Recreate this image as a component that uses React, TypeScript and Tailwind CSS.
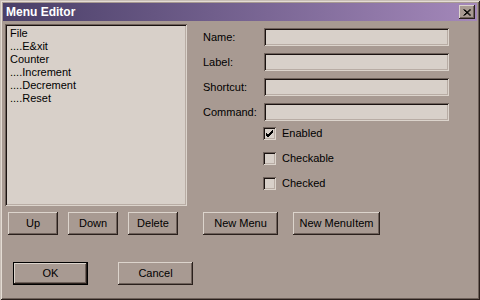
import React from "react";

const raised =
  "shadow-[inset_-1px_-1px_#2a201c,inset_1px_1px_#dcd4cc,inset_-2px_-2px_#6e615a]";
const sunken =
  "shadow-[inset_1px_1px_#6e615a,inset_-1px_-1px_#dcd4cc,inset_2px_2px_#1a1210,inset_-2px_-2px_#b8aca4]";

function Btn({ label, w, def }: { label: string; w: string; def?: boolean }) {
  if (def) {
    return (
      <div className={`${w} h-[23px] border border-black bg-[#a89a92]`}>
        <div className={`w-full h-full ${raised} flex items-center justify-center text-[11px] text-black`}>
          {label}
        </div>
      </div>
    );
  }
  return (
    <div className={`${w} h-[23px] bg-[#a89a92] ${raised} flex items-center justify-center text-[11px] text-black`}>
      {label}
    </div>
  );
}

function Field({ label }: { label: string }) {
  return (
    <div className="flex items-center h-[18px]">
      <div className="w-[61px] text-[11px] text-black">{label}</div>
      <div className={`w-[185px] h-[18px] bg-[#d8d0c9] ${sunken}`} />
    </div>
  );
}

function Check({ label, checked }: { label: string; checked?: boolean }) {
  return (
    <div className="flex items-center h-[13px]">
      <div className={`w-[13px] h-[13px] bg-[#d8d0c9] ${sunken} flex items-center justify-center`}>
        {checked && (
          <svg width="9" height="9" viewBox="0 0 9 9">
            <path d="M1 4 L3 6 L8 1 M1 5 L3 7 L8 2 M1 6 L3 8 L8 3" stroke="#000" strokeWidth="1" fill="none" />
          </svg>
        )}
      </div>
      <div className="ml-[6px] text-[11px] text-black">{label}</div>
    </div>
  );
}

export default function App() {
  const items = ["File", "....E&xit", "Counter", "....Increment", "....Decrement", "....Reset"];
  return (
    <div
      className={`w-[480px] h-[300px] bg-[#a89a92] p-[3px] flex flex-col shadow-[inset_1px_1px_#c8beb6,inset_-1px_-1px_#2a201c,inset_2px_2px_#e4dcd4,inset_-2px_-2px_#6e615a] overflow-hidden`}
      style={{ fontFamily: '"Liberation Sans", Arial, sans-serif' }}
    >
      <div className="h-[18px] flex items-center justify-between bg-gradient-to-r from-[#4a3f68] to-[#a488ba] pl-[3px] pr-[2px]">
        <span className="text-white font-bold text-[12px] leading-none">Menu Editor</span>
        <div className={`w-[16px] h-[14px] bg-[#a89a92] ${raised} flex items-center justify-center`}>
          <svg width="8" height="7" viewBox="0 0 8 7">
            <path d="M0.5 0.5 L7 6.5 M1.5 0.5 L8 6.5 M7 0.5 L0.5 6.5 M8 0.5 L1.5 6.5" stroke="#000" strokeWidth="1" fill="none" />
          </svg>
        </div>
      </div>
      <div className="flex">
        <div className="ml-[2px] mt-[3px] flex flex-col">
          <div className={`w-[182px] h-[182px] bg-[#d8d0c9] ${sunken} pl-[5px] pt-[3px]`}>
            {items.map((t) => (
              <div key={t} className="h-[13px] leading-[13px] text-[11px] text-black whitespace-pre">
                {t}
              </div>
            ))}
          </div>
          <div className="mt-[6px] ml-[3px] flex gap-[10px]">
            <Btn label="Up" w="w-[50px]" />
            <Btn label="Down" w="w-[50px]" />
            <Btn label="Delete" w="w-[50px]" />
          </div>
        </div>
        <div className="ml-[16px] mt-[7px] flex flex-col">
          <div className="flex flex-col gap-[7px]">
            <Field label="Name:" />
            <Field label="Label:" />
            <Field label="Shortcut:" />
            <Field label="Command:" />
          </div>
          <div className="ml-[60px] mt-[6px] flex flex-col gap-[12px]">
            <Check label="Enabled" checked />
            <Check label="Checkable" />
            <Check label="Checked" />
          </div>
          <div className="mt-[22px] flex gap-[15px]">
            <Btn label="New Menu" w="w-[75px]" />
            <Btn label="New MenuItem" w="w-[87px]" />
          </div>
        </div>
      </div>
      <div className="mt-[27px] ml-[10px] flex gap-[30px]">
        <Btn label="OK" w="w-[75px]" def />
        <Btn label="Cancel" w="w-[75px]" />
      </div>
    </div>
  );
}
